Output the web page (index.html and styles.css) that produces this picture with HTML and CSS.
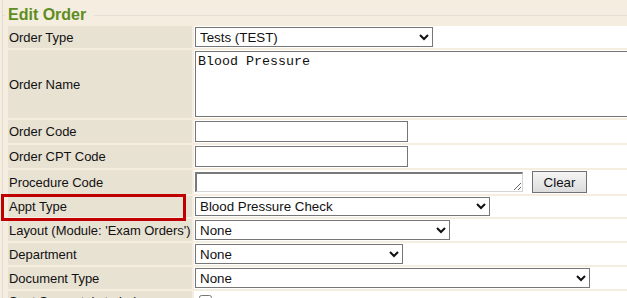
FILE: index.html
```html
<!DOCTYPE html>
<html>
<head>
<meta charset="utf-8">
<title>Edit Order</title>
<link rel="stylesheet" href="styles.css">
</head>
<body>
<div class="page">
  <fieldset class="panel">
    <legend class="panel-title">Edit Order</legend>
    <table class="form">
      <tr>
        <td class="label">Order Type</td>
        <td class="value"><select class="sel sel-type"><option>Tests (TEST)</option></select></td>
      </tr>
      <tr>
        <td class="label">Order Name</td>
        <td class="value"><textarea class="name-area">Blood Pressure</textarea></td>
      </tr>
      <tr>
        <td class="label">Order Code</td>
        <td class="value"><input class="txt" type="text"></td>
      </tr>
      <tr>
        <td class="label">Order CPT Code</td>
        <td class="value"><input class="txt" type="text"></td>
      </tr>
      <tr>
        <td class="label">Procedure Code</td>
        <td class="value">
          <div class="proc">
            <textarea class="proc-area"></textarea>
            <button class="btn" type="button">Clear</button>
          </div>
        </td>
      </tr>
      <tr>
        <td class="label label-marked">Appt Type<span class="highlight"></span></td>
        <td class="value"><select class="sel sel-appt"><option>Blood Pressure Check</option></select></td>
      </tr>
      <tr>
        <td class="label">Layout (Module: 'Exam Orders')</td>
        <td class="value"><select class="sel sel-layout"><option>None</option></select></td>
      </tr>
      <tr>
        <td class="label">Department</td>
        <td class="value"><select class="sel sel-dept"><option>None</option></select></td>
      </tr>
      <tr>
        <td class="label">Document Type</td>
        <td class="value"><select class="sel sel-doc"><option>None</option></select></td>
      </tr>
      <tr>
        <td class="label">Sent Separately to Lab</td>
        <td class="value"><input class="chk" type="checkbox"></td>
      </tr>
    </table>
  </fieldset>
</div>
</body>
</html>
```

FILE: styles.css
```css
html, body {
  margin: 0;
  padding: 0;
  background: #f4ede0;
  overflow: hidden;
}

body {
  font-family: "Liberation Sans", Arial, sans-serif;
  font-size: 13px;
  color: #111;
}

.page {
  margin-left: 2px;
  padding-top: 6px;
  border-left: 1px solid #e2ddd2;
  min-height: 300px;
}

.panel {
  margin: 0;
  padding: 0 0 0 3px;
  border: none;
  border-top: 1px solid #e4e0d6;
  min-width: 0;
}

.panel-title {
  padding: 0 8px 0 2px;
  font-size: 16px;
  line-height: 18px;
  font-weight: bold;
  color: #5f8c1e;
}

.form {
  border-collapse: separate;
  border-spacing: 2px;
  width: 800px;
}

.form td {
  padding: 1px;
  vertical-align: middle;
}

.label {
  width: 182px;
  background: #e8e2d3;
  white-space: nowrap;
  font-size: 13px;
  letter-spacing: -0.04px;
}

.label-marked {
  position: relative;
}

.highlight {
  position: absolute;
  left: -7px;
  top: -2px;
  width: 185px;
  height: 27px;
  box-sizing: border-box;
  border: 3px solid #c00000;
  pointer-events: none;
}

.value {
  background: #fff;
}

.sel {
  display: block;
  height: 20px;
  margin: 0;
  font-family: "Liberation Sans", Arial, sans-serif;
  font-size: 13.33px;
  color: #111;
  background: #fff;
  border: 1px solid #767676;
  border-radius: 0;
}

.sel-type { width: 238px; }
.sel-appt { width: 295px; height: 19px; }
.sel-layout { width: 255px; }
.sel-dept { width: 208px; }
.sel-doc { width: 395px; }

.name-area {
  display: block;
  box-sizing: border-box;
  width: 480px;
  height: 66px;
  margin: 0;
  padding: 2px;
  font-family: "Liberation Mono", "Courier New", monospace;
  font-size: 13.33px;
  color: #111;
  border: 1px solid #767676;
  resize: none;
}

.txt {
  display: block;
  box-sizing: border-box;
  width: 213px;
  height: 21px;
  margin: 0;
  padding: 1px 2px;
  border: 1px solid #767676;
  border-radius: 0;
  font-family: "Liberation Sans", Arial, sans-serif;
  font-size: 13.33px;
}

.proc {
  display: flex;
  align-items: center;
  gap: 9px;
}

.proc-area {
  box-sizing: border-box;
  width: 328px;
  height: 20px;
  margin: 0;
  padding: 1px 2px;
  border-style: solid;
  border-width: 2px 1px 1px 2px;
  border-color: #7a7a7a #d4d4d4 #d4d4d4 #7a7a7a;
  font-family: "Liberation Mono", monospace;
  font-size: 13.33px;
  resize: both;
  overflow: hidden;
}

.btn {
  box-sizing: border-box;
  width: 55px;
  height: 22px;
  margin: 0;
  padding: 0;
  font-family: "Liberation Sans", Arial, sans-serif;
  font-size: 13.33px;
  color: #111;
  border: 1px solid #707070;
  border-radius: 0;
  background: linear-gradient(#f5f5f5, #dcdcdc);
}

.chk {
  display: block;
  width: 13px;
  height: 13px;
  margin: 3px 0 3px 4px;
}
```
